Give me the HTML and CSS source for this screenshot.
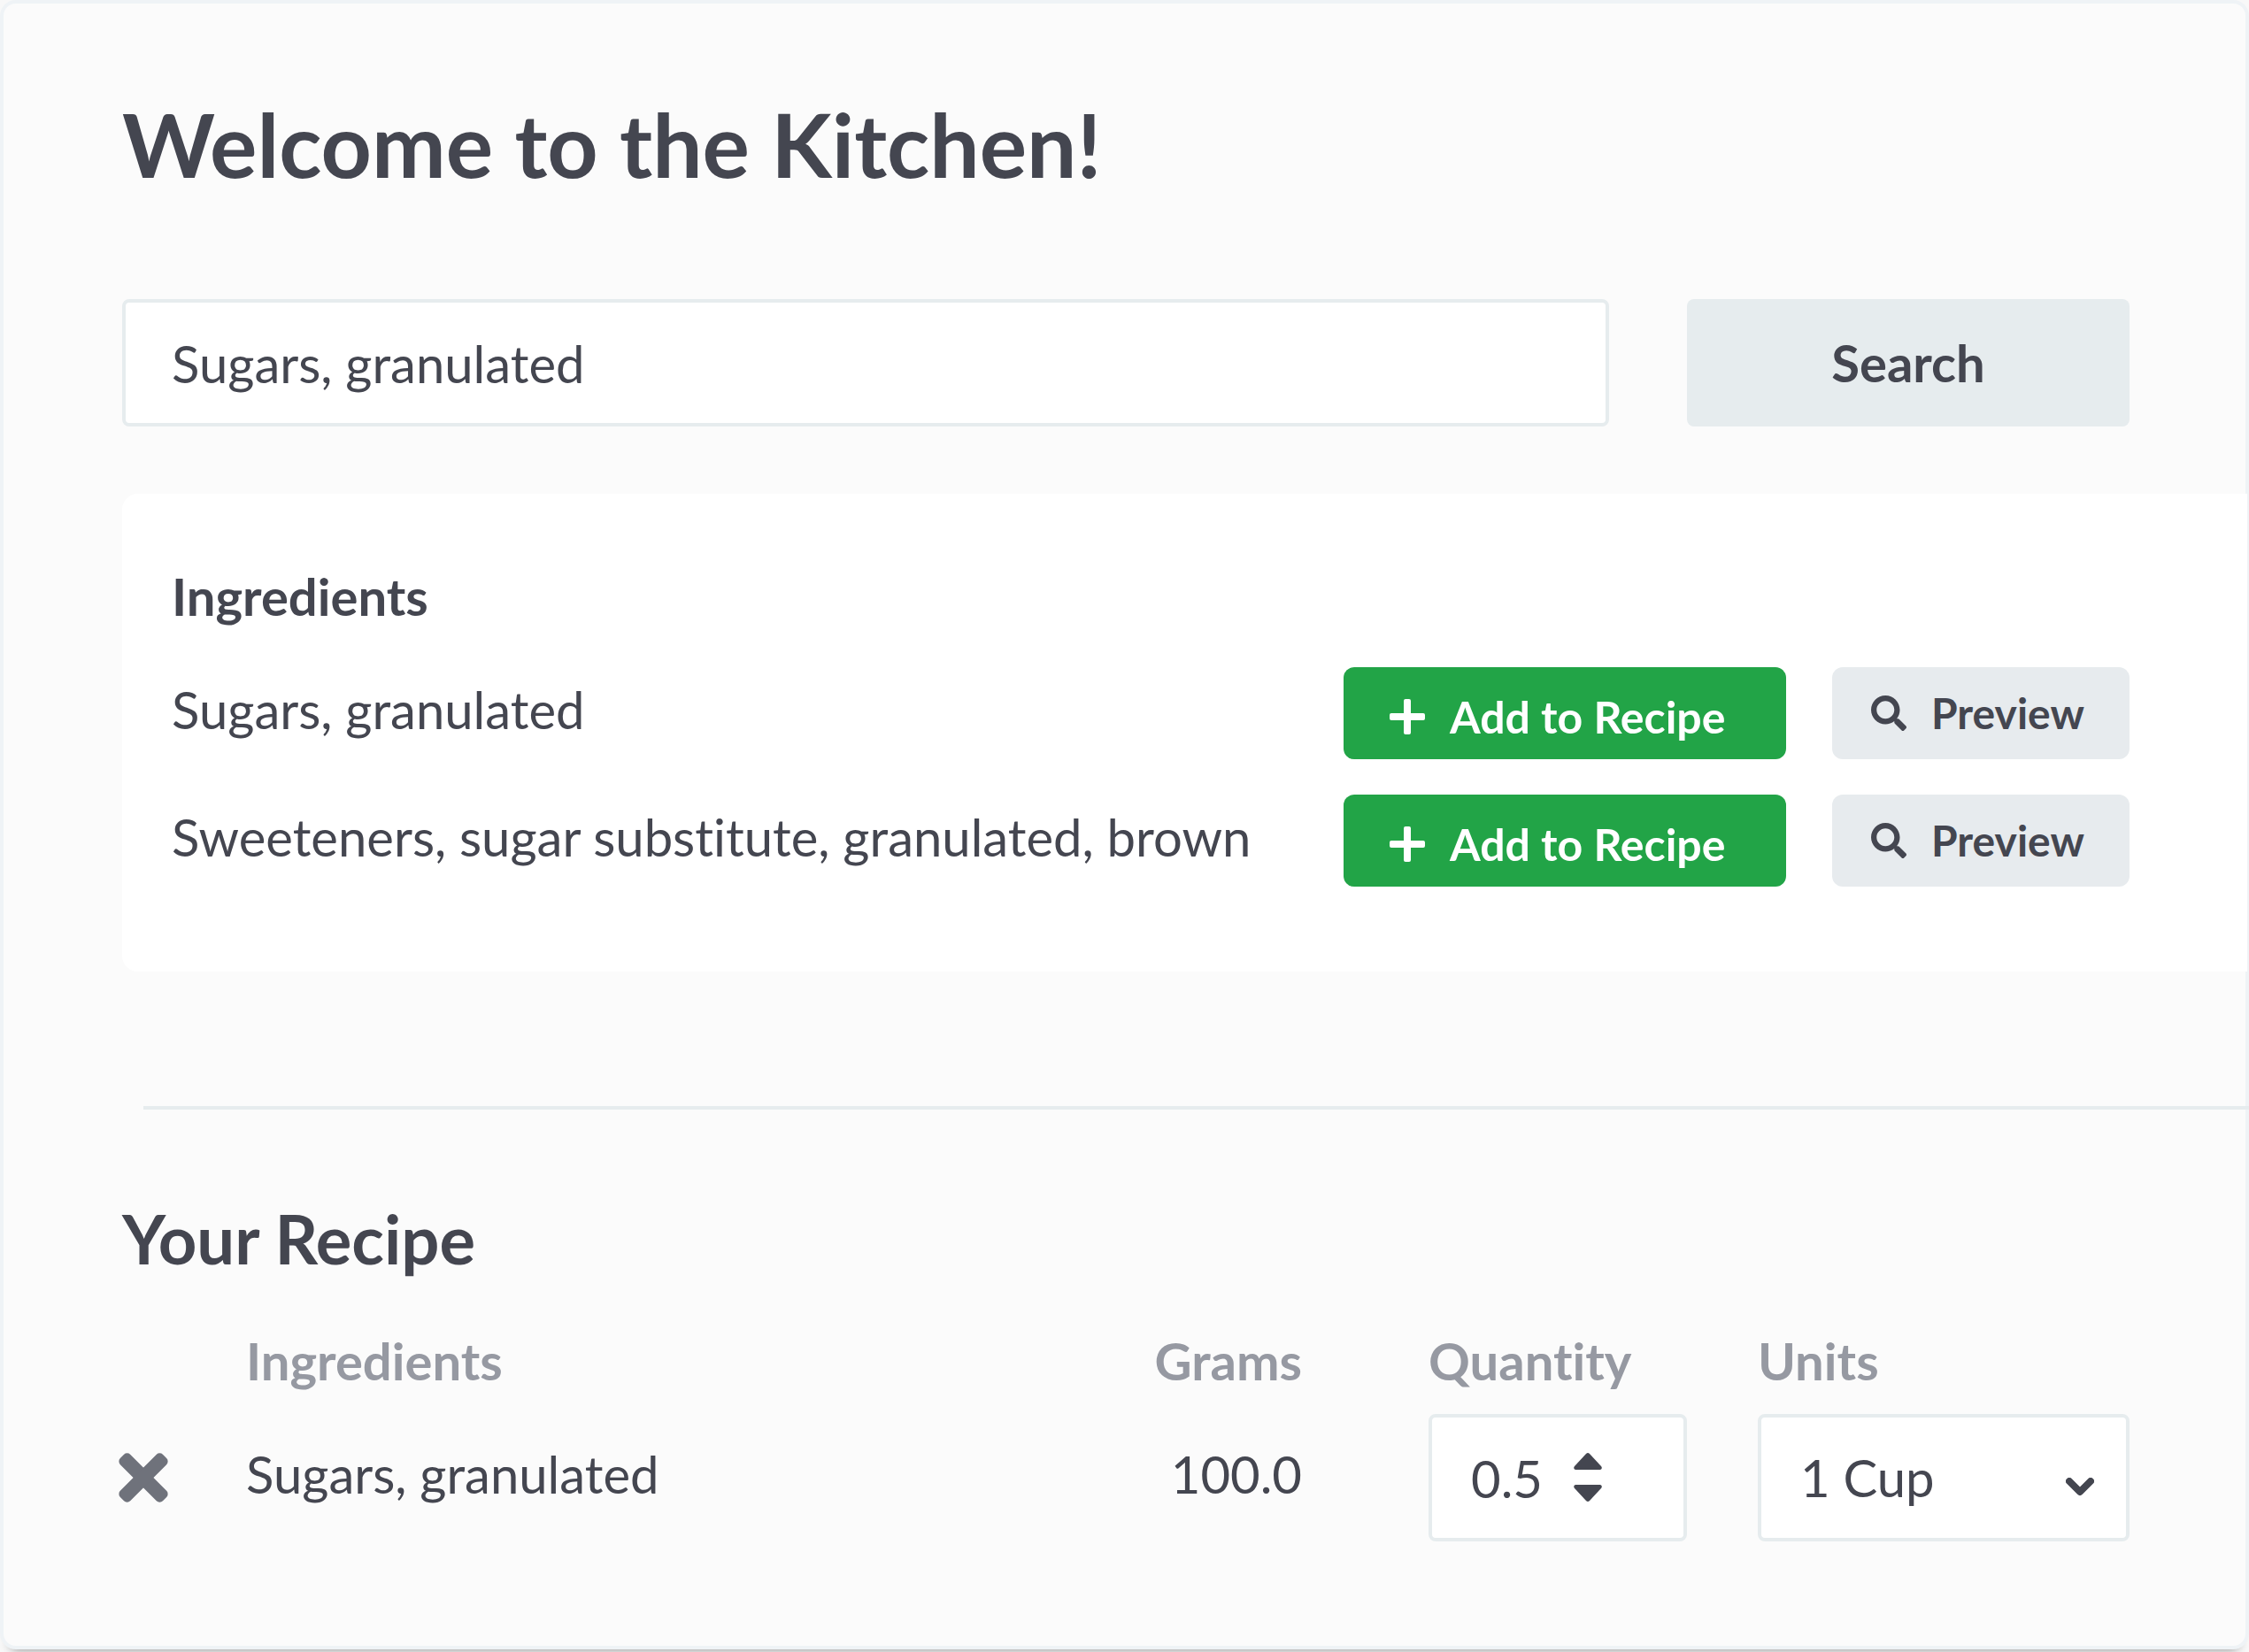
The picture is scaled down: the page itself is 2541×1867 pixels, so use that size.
FILE: index.html
```html
<!DOCTYPE html>
<html lang="en">
<head>
  <meta charset="utf-8">
  <meta name="viewport" content="width=device-width, initial-scale=1">
  <title>Welcome to the Kitchen!</title>
  <link rel="stylesheet" href="styles.css">
</head>
<body>
  <svg class="sprite" aria-hidden="true">
    <symbol id="plus" viewBox="0 0 40 40">
      <path fill="currentColor" d="M18 0h4q2 0 2 2v14h14q2 0 2 2v4q0 2-2 2H24v14q0 2-2 2h-4q-2 0-2-2V24H2q-2 0-2-2v-4q0-2 2-2h14V2q0-2 2-2z"/>
    </symbol>
    <symbol id="magnifier" viewBox="0 0 512 512">
      <path fill="currentColor" d="M505 442.700L405.300 343c-4.500-4.500-10.600-7-17-7H372c27.600-35.300 44-79.700 44-128C416 93.100 322.900 0 208 0S0 93.100 0 208s93.100 208 208 208c48.300 0 92.700-16.400 128-44v16.300c0 6.400 2.500 12.500 7 17l99.700 99.700c9.400 9.400 24.600 9.400 33.900 0l28.300-28.300c9.400-9.400 9.400-24.600.1-34zM208 336c-70.700 0-128-57.200-128-128 0-70.700 57.200-128 128-128 70.700 0 128 57.200 128 128 0 70.700-57.200 128-128 128z"/>
    </symbol>
  </svg>

  <main class="kitchen">
    <h1 class="title">Welcome to the Kitchen!</h1>

    <form class="search">
      <input class="field search-field" type="text" value="Sugars, granulated" aria-label="Search ingredients">
      <button class="search-button" type="button">Search</button>
    </form>

    <section class="results">
      <h2 class="results-title">Ingredients</h2>
      <ul class="results-list">
        <li class="result">
          <span class="result-name">Sugars, granulated</span>
          <button class="button button-add" type="button"><svg class="icon" aria-hidden="true"><use href="#plus"/></svg>Add to Recipe</button>
          <button class="button button-preview" type="button"><svg class="icon" aria-hidden="true"><use href="#magnifier"/></svg>Preview</button>
        </li>
        <li class="result">
          <span class="result-name">Sweeteners, sugar substitute, granulated, brown</span>
          <button class="button button-add" type="button"><svg class="icon" aria-hidden="true"><use href="#plus"/></svg>Add to Recipe</button>
          <button class="button button-preview" type="button"><svg class="icon" aria-hidden="true"><use href="#magnifier"/></svg>Preview</button>
        </li>
      </ul>
    </section>

    <hr class="divider">

    <section class="recipe">
      <h2 class="recipe-title">Your Recipe</h2>
      <table class="recipe-table">
        <colgroup>
          <col class="col-remove">
          <col>
          <col class="col-grams">
          <col class="col-quantity">
          <col class="col-units">
        </colgroup>
        <thead>
          <tr>
            <td></td>
            <th scope="col">Ingredients</th>
            <th scope="col" class="grams">Grams</th>
            <th scope="col" class="quantity">Quantity</th>
            <th scope="col">Units</th>
          </tr>
        </thead>
        <tbody>
          <tr>
            <td>
              <button class="remove" type="button" aria-label="Remove Sugars, granulated">
                <svg class="remove-icon" viewBox="0 0 56 56" aria-hidden="true"><g fill="currentColor" transform="rotate(45 28 28)"><rect x="-6" y="20" width="68" height="16" rx="5"/><rect x="20" y="-6" width="16" height="68" rx="5"/></g></svg>
              </button>
            </td>
            <td class="value">Sugars, granulated</td>
            <td class="value grams">100.0</td>
            <td class="quantity">
              <div class="control">
                <input class="field quantity-field" type="number" step="0.5" value="0.5" aria-label="Quantity">
                <div class="stepper">
                  <button class="step" type="button" aria-label="Increase"><svg class="step-icon" viewBox="0 0 32 20" aria-hidden="true"><path fill="currentColor" d="M2 19q-3-1-1-4L14 1q2-2 4 0l13 14q2 3-1 4z"/></svg></button>
                  <button class="step" type="button" aria-label="Decrease"><svg class="step-icon" viewBox="0 0 32 20" aria-hidden="true"><path fill="currentColor" d="M2 0q-3 1-1 4l13 14q2 2 4 0L31 4q2-3-1-4z"/></svg></button>
                </div>
              </div>
            </td>
            <td>
              <div class="control">
                <select class="field units-field" aria-label="Units">
                  <option>1 Cup</option>
                </select>
                <svg class="chevron" viewBox="0 0 32 22" aria-hidden="true"><path fill="none" stroke="currentColor" stroke-width="8" stroke-linecap="round" stroke-linejoin="round" d="M4 4l12 12L28 4"/></svg>
              </div>
            </td>
          </tr>
        </tbody>
      </table>
    </section>
  </main>
</body>
</html>
```
FILE: styles.css
```css
:root {
  --ink: #444650;
  --muted: #9699a2;
  --line: #e6ecee;
  --green: #22a447;
  --gutter: 134px;
}

* {
  box-sizing: border-box;
}

body {
  margin: 0;
  background: #f8f8f8;
  color: var(--ink);
  font-family: Lato, "Liberation Sans", sans-serif;
  font-size: 58px;
  font-variant-ligatures: none;
  line-height: 72px;
}

button,
input,
select {
  margin: 0;
  color: inherit;
  font: inherit;
  font-variant-ligatures: none;
}

h1,
h2,
ul {
  margin: 0;
  padding: 0;
}

.sprite {
  display: none;
}

.kitchen {
  min-height: calc(100vh - 3px);
  margin-bottom: 3px;
  padding: 98px 0 100px var(--gutter);
  border: 4px solid #eff3f6;
  border-radius: 18px;
  background: #fbfbfb;
  box-shadow: 0 12px 12px -12px #888;
}

.title {
  font-size: 100px;
  font-weight: 700;
  line-height: 120px;
}

.field {
  display: block;
  width: 100%;
  height: 144px;
  padding: 0 52px;
  border: 4px solid var(--line);
  border-radius: 8px;
  outline: 0;
  background: #fff;
  appearance: none;
}

.search {
  display: grid;
  grid-template-columns: 1fr 500px;
  gap: 88px;
  margin: 116px 131px 76px 0;
}

.search-button {
  border: 0;
  border-radius: 8px;
  background: var(--line);
  font-weight: 700;
}

.results {
  margin-right: -2px;
  padding: 80px 133px 96px 56px;
  border-radius: 18px 0 0 18px;
  background: #fff;
}

.results-title {
  font-size: 58px;
  font-weight: 700;
}

.results-list {
  display: grid;
  gap: 40px;
  margin-top: 44px;
  list-style: none;
}

.result {
  display: grid;
  grid-template-columns: 1fr 500px 336px;
  align-items: center;
  column-gap: 52px;
}

.result-name {
  padding-bottom: 8px;
}

.button {
  display: flex;
  align-items: center;
  gap: 28px;
  height: 104px;
  border: 0;
  border-radius: 12px;
  font-size: 48px;
  font-weight: 700;
}

.button-add {
  padding: 8px 52px 0;
  background: var(--green);
  color: #fff;
  font-size: 50px;
}

.button-preview {
  padding: 0 44px;
  background: #e7ebee;
}

.icon {
  flex: none;
  width: 40px;
  height: 40px;
}

.divider {
  height: 4px;
  margin: 152px -4px 0 24px;
  border: 0;
  background: var(--line);
}

.recipe {
  margin: 102px 131px 0 0;
}

.recipe-title {
  font-size: 76px;
  font-weight: 700;
  line-height: 88px;
}

.recipe-table {
  width: 100%;
  margin-top: 58px;
  border-collapse: collapse;
  table-layout: fixed;
}

.recipe-table th,
.recipe-table td {
  padding: 0;
  text-align: left;
  vertical-align: middle;
}

.recipe-table th {
  padding-bottom: 24px;
  color: var(--muted);
  font-weight: 700;
}

.recipe-table .value {
  padding-bottom: 8px;
}

.col-remove {
  width: 140px;
}

.col-grams {
  width: 240px;
}

.col-quantity {
  width: 515px;
}

.col-units {
  width: 420px;
}

.recipe-table .grams {
  text-align: right;
}

.recipe-table .quantity {
  padding-left: 143px;
  padding-right: 80px;
}

.remove {
  display: block;
  width: 56px;
  height: 56px;
  margin-left: -4px;
  padding: 0;
  border: 0;
  background: none;
  color: #6f727b;
}

.remove-icon,
.step-icon {
  display: block;
  width: 100%;
}

.control {
  position: relative;
}

.quantity-field,
.units-field {
  padding: 0 44px;
}

.quantity-field::-webkit-inner-spin-button {
  display: none;
}

.stepper {
  position: absolute;
  top: 44px;
  left: 164px;
  display: grid;
  gap: 16px;
  width: 32px;
}

.step {
  padding: 0;
  border: 0;
  background: none;
}

.chevron {
  position: absolute;
  right: 40px;
  bottom: 50px;
  width: 32px;
  height: 22px;
}
```
